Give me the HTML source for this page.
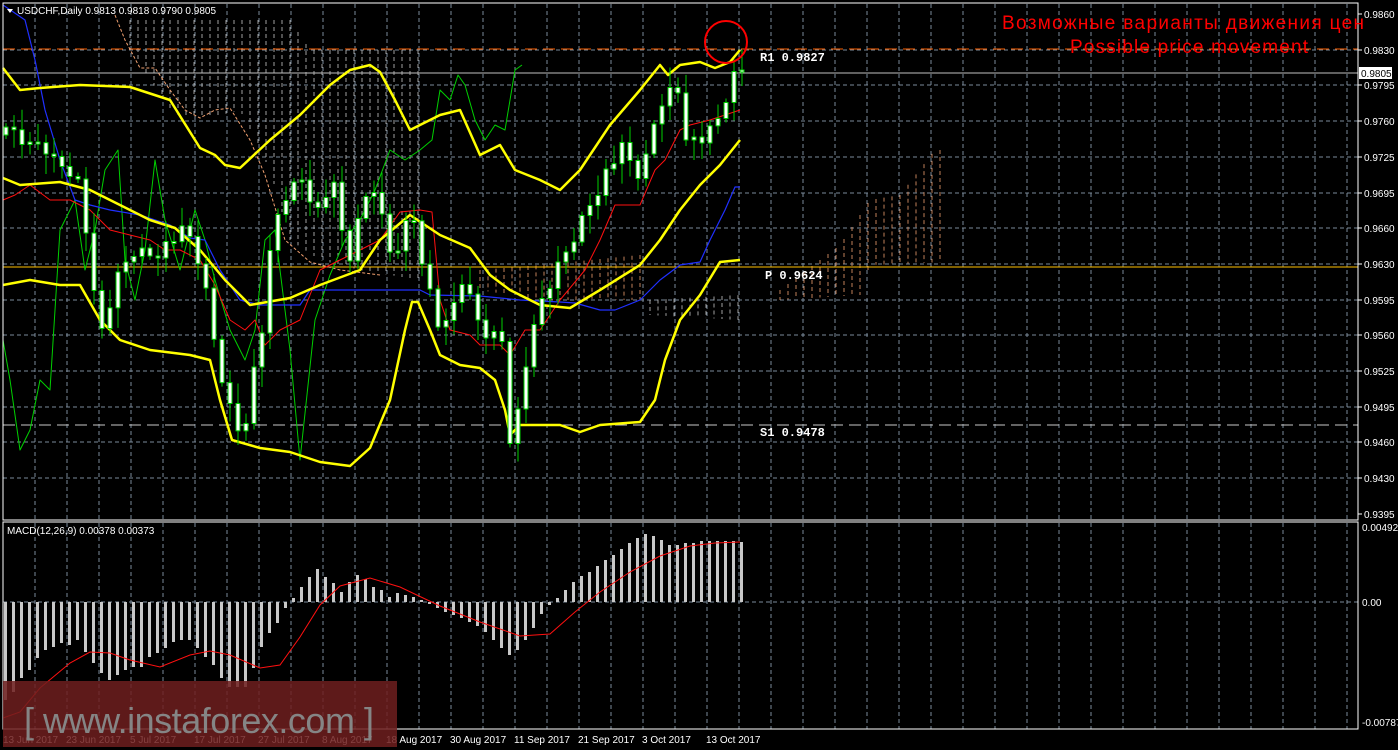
<!DOCTYPE html>
<html><head><meta charset="utf-8"><style>
html,body{margin:0;padding:0;background:#000;width:1398px;height:750px;overflow:hidden}
svg{display:block}
text{font-family:"Liberation Sans",sans-serif}
</style></head><body>
<svg id="s" width="1398" height="750" xmlns="http://www.w3.org/2000/svg">
<rect width="1398" height="750" fill="#000"/>
<g id="grid"></g>
<g id="cloud"></g>
<line x1="3" y1="267" x2="1358" y2="267" stroke="#ffc000" stroke-width="1"/>
<line x1="3" y1="49" x2="1358" y2="49" stroke="#ff6000" stroke-width="1" stroke-dasharray="12,6"/>
<line x1="3" y1="425" x2="1358" y2="425" stroke="#c8c8c8" stroke-width="1" stroke-dasharray="12,6"/>
<line x1="3" y1="73" x2="1358" y2="73" stroke="#c0c0c0" stroke-width="1"/>
<g id="lines"></g>
<g id="candles"></g>
<g id="macd"></g>
<rect x="3" y="3" width="1355" height="517" fill="none" stroke="#fff" stroke-width="1"/>
<rect x="3" y="522" width="1355" height="207" fill="none" stroke="#fff" stroke-width="1"/>
<g id="axis" font-size="10" fill="#fff"></g>
<rect x="1359" y="67" width="33" height="12" fill="#fff"/>
<text x="1361" y="77" font-size="10" fill="#000">0.9805</text>
<polygon points="7,9 13,9 10,13" fill="#fff"/>
<text x="17" y="14" font-size="10" fill="#fff">USDCHF,Daily  0.9813 0.9818 0.9790 0.9805</text>
<text x="7" y="534" font-size="10" fill="#fff">MACD(12,26,9) 0.00378 0.00373</text>
<text x="760" y="61" font-size="12" fill="#fff" style="font-family:'Liberation Mono',monospace" font-weight="bold">R1  0.9827</text>
<text x="765" y="279" font-size="12" fill="#fff" style="font-family:'Liberation Mono',monospace" font-weight="bold">P  0.9624</text>
<text x="760" y="436" font-size="12" fill="#fff" style="font-family:'Liberation Mono',monospace" font-weight="bold">S1  0.9478</text>
<circle cx="726" cy="42" r="21" fill="none" stroke="#f00" stroke-width="2"/>
<text x="1002" y="29" font-size="19" fill="#f00" textLength="362">Возможные варианты движения цен</text>
<text x="1070" y="53" font-size="19" fill="#f00" textLength="238">Possible price movement</text>
<rect x="3" y="681" width="394" height="66" fill="rgba(110,30,30,0.85)"/>
<text x="24" y="733" font-size="36" fill="#858585" textLength="350" font-weight="300">[ www.instaforex.com ]</text>
</svg>
<script>
var NS="http://www.w3.org/2000/svg";
function el(p,t,a){var e=document.createElementNS(NS,t);for(var k in a)e.setAttribute(k,a[k]);document.getElementById(p).appendChild(e);return e;}
for(var x=35;x<1358;x+=32){el("grid","line",{x1:x,y1:4,x2:x,y2:520,stroke:"#7a8a9a","stroke-dasharray":"4,3"});el("grid","line",{x1:x,y1:523,x2:x,y2:729,stroke:"#7a8a9a","stroke-dasharray":"4,3"});}
var labs=["0.9860","0.9830","0.9795","0.9760","0.9725","0.9695","0.9660","0.9630","0.9595","0.9560","0.9525","0.9495","0.9460","0.9430","0.9395"];
labs.forEach(function(l,i){var y=Math.round(14+35.7*i);if(i>0&&i<14)el("grid","line",{x1:3,y1:y,x2:1358,y2:y,stroke:"#7a8a9a","stroke-dasharray":"4,3"});el("axis","line",{x1:1358,y1:y,x2:1362,y2:y,stroke:"#fff"});var t=el("axis","text",{x:1364,y:y+4});t.textContent=l;});
el("grid","line",{x1:3,y1:602,x2:1358,y2:602,stroke:"#7a8a9a","stroke-dasharray":"4,3"});
[["0.00492",531],["0.00",606],["-0.00787",726]].forEach(function(a){var t=el("axis","text",{x:1362,y:a[1]});t.textContent=a[0];});
var dates=[["13 Jun 2017",3],["23 Jun 2017",66],["5 Jul 2017",130],["17 Jul 2017",194],["27 Jul 2017",258],["8 Aug 2017",322],["18 Aug 2017",386],["30 Aug 2017",450],["11 Sep 2017",514],["21 Sep 2017",578],["3 Oct 2017",642],["13 Oct 2017",706]];
dates.forEach(function(d){var t=el("axis","text",{x:d[1],y:743});t.textContent=d[0];});
function cloud(x0,x1,top,bot,col){for(var x=x0;x<=x1;x+=8){el("cloud","line",{x1:x,y1:top(x),x2:x,y2:bot(x),stroke:col,"stroke-dasharray":"4,3","stroke-width":0.8});}}
function interp(pts){return function(x){for(var i=1;i<pts.length;i++){if(x<=pts[i][0]){var a=pts[i-1],b=pts[i];return a[1]+(b[1]-a[1])*(x-a[0])/(b[0]-a[0]);}}return pts[pts.length-1][1];};}
cloud(130,420,interp([[130,20],[200,20],[290,20],[310,50],[420,50]]),interp([[130,50],[150,80],[175,115],[210,118],[240,110],[270,170],[290,240],[320,260],[360,270],[420,280]]),"#c8c8c8");
el("lines","polyline",{points:"115,15 125,40 140,68 155,68 170,90 185,110 200,118 215,110 230,108 250,140 265,175 285,240 310,262 340,270 380,275",fill:"none",stroke:"#f0a070","stroke-dasharray":"3,2"});
cloud(480,640,interp([[480,270],[540,265],[640,255]]),interp([[480,290],[540,300],[640,300]]),"#f0a070");
cloud(650,740,interp([[650,300],[740,295]]),interp([[650,315],[740,320]]),"#c8c8c8");
cloud(780,940,interp([[780,290],[840,245],[870,200],[900,195],[935,150],[945,150]]),interp([[780,300],[860,295],[870,265],[945,262]]),"#f0a070");
function pl(pts,c,w){el("lines","polyline",{points:pts,fill:"none",stroke:c,"stroke-width":w,"stroke-linejoin":"round"});}
pl("3,340 10,380 20,450 30,430 40,380 50,390 60,230 75,200 85,270 95,230 105,170 118,150 125,260 135,300 145,250 155,160 165,220 180,270 195,210 205,240 215,280 230,330 245,360 255,330 265,240 275,230 290,350 300,460 315,320 330,275 345,240 360,220 375,190 390,150 405,160 420,150 432,140 440,90 450,100 458,75 465,85 475,120 485,140 495,125 505,130 515,70 522,65",'#00d000',1);
pl("3,5 25,20 35,60 45,110 60,160 75,200 90,205 110,210 140,215 170,225 190,238 205,240 220,270 240,300 260,305 300,305 310,290 340,290 400,290 420,290 430,295 480,296 520,300 560,302 575,303 600,310 615,310 640,300 660,280 680,265 700,262 710,240 725,210 735,187 740,187",'#2030ff',1.2);
pl("3,200 15,195 30,185 50,200 70,200 90,210 110,230 130,235 150,240 165,250 180,250 200,260 215,285 230,320 245,330 255,320 265,345 280,330 300,320 320,270 340,260 360,250 380,240 400,212 420,210 432,212 440,300 450,330 470,335 480,345 500,345 510,355 525,330 540,330 560,300 585,270 600,240 615,205 640,205 655,170 665,160 680,130 690,125 710,120 740,110",'#ff1010',1);
pl("3,68 20,90 40,88 80,85 130,87 170,100 200,148 215,155 225,165 240,168 270,140 300,115 330,85 350,70 370,65 380,72 395,100 410,130 440,115 460,110 480,155 500,145 515,170 540,180 560,190 580,170 610,125 640,90 660,65 668,75 680,65 700,62 715,68 730,62 740,50",'#ffff00',2.5);
pl("3,178 20,185 60,182 90,190 120,205 150,220 175,228 200,250 225,280 250,305 290,298 320,285 360,270 380,240 410,215 440,235 470,248 490,275 510,290 540,305 570,308 600,290 640,265 660,240 680,210 700,185 720,165 740,140",'#ffff00',2.5);
pl("3,285 30,280 60,285 80,285 100,320 120,340 150,350 190,355 210,360 220,400 232,440 260,448 290,452 320,462 350,466 370,448 390,400 405,330 412,302 418,302 430,330 440,355 460,365 480,368 495,380 505,410 510,435 520,425 560,425 580,432 600,425 640,422 655,400 665,360 680,320 700,295 720,262 740,260",'#ffff00',2.5);
var cp=interp([[3,135],[15,130],[25,150],[40,140],[50,160],[70,170],[80,190],[90,290],[100,330],[115,280],[130,250],[150,255],[170,240],[185,230],[200,270],[210,330],[225,400],[240,440],[250,380],[260,330],[270,240],[280,200],[300,180],[320,220],[330,160],[345,270],[360,210],[370,180],[390,260],[410,210],[425,280],[440,340],[460,280],[480,330],[500,340],[510,460],[520,380],[540,300],[560,260],[575,230],[590,200],[605,170],[620,150],[640,180],[650,130],[660,100],[675,85],[682,130],[690,140],[700,140],[712,130],[720,110],[730,80],[738,70]]);
var prev=cp(3);
for(var i=0;i<93;i++){var x=4+8*i;var c=cp(x)+((i*37)%11-5)*1.5;var o=prev;prev=c;var t=Math.min(o,c),b=Math.max(o,c);if(b-t<2)b=t+2;var hi=t-4-((i*13)%9)*2,lo=b+4+((i*7)%9)*2;
el("candles","line",{x1:x+2,y1:hi,x2:x+2,y2:lo,stroke:"#00d000"});
el("candles","rect",{x:x,y:t,width:4,height:b-t,fill:"#fff",stroke:"#00d000","stroke-width":1});}
var h=[700,692,678,670,658,650,647,643,645,640,652,663,673,680,675,670,667,667,657,653,648,642,640,640,648,657,665,678,687,687,687,668,647,633,623,608,598,587,577,569,577,583,592,582,575,579,587,590,597,593,595,597,600,604,608,612,615,618,622,626,632,640,648,655,650,640,628,614,605,598,590,582,576,572,566,560,555,549,543,538,534,536,540,545,545,543,543,541,541,541,541,541,542];
h.forEach(function(y,i){var x=4+8*i;el("macd","rect",{x:x,y:Math.min(y,602),width:3,height:Math.abs(y-602)||1,fill:"#c8c8c8"});});
el("macd","polyline",{points:"3,718 20,712 40,688 70,663 90,652 110,653 130,660 160,667 190,655 210,651 230,655 260,668 280,665 300,637 320,605 340,586 370,578 400,587 440,606 480,622 520,636 550,634 575,612 600,592 630,572 660,556 690,546 715,543 740,542",fill:"none",stroke:"#ff1010","stroke-width":1});
</script>
</body></html>
